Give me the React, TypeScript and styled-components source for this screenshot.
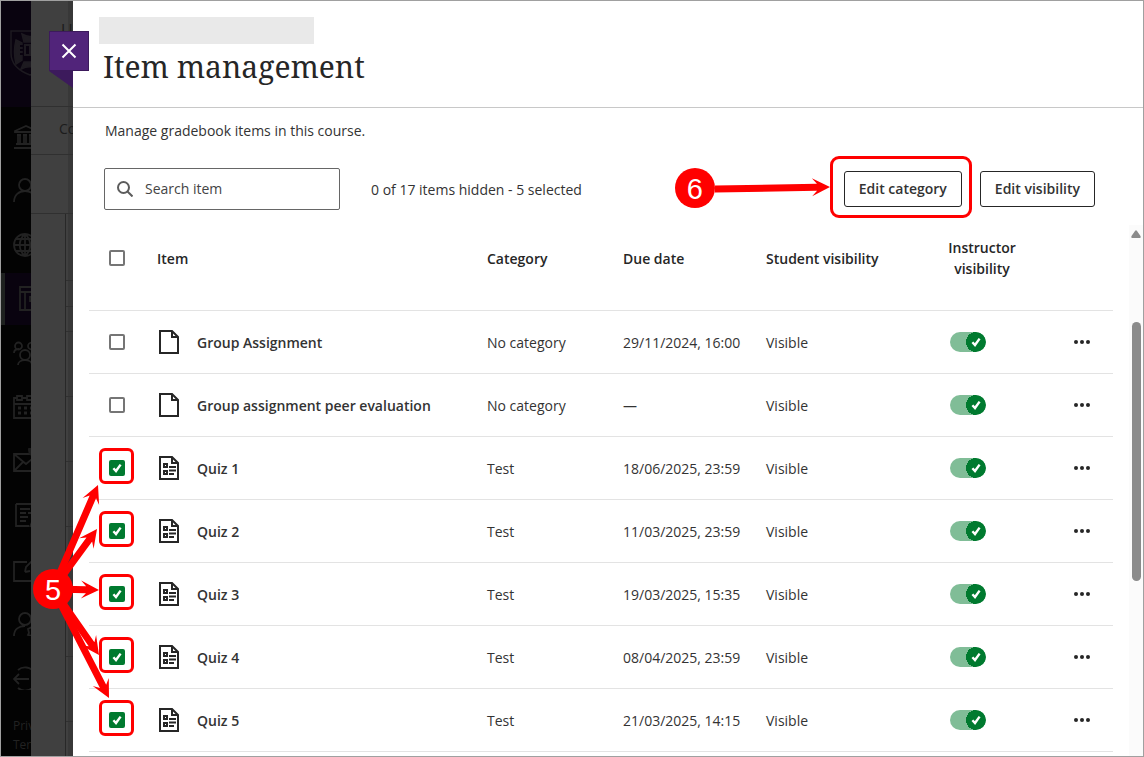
import React from "react";
import styled, { createGlobalStyle, css } from "styled-components";

const GlobalStyle = createGlobalStyle`
  *, *::before, *::after { box-sizing: border-box; }
  body {
    margin: 0;
    background: #fff;
    color: #333;
    font-family: "Open Sans", "Noto Sans", sans-serif;
    font-size: 14px;
    line-height: 20px;
  }
  button, input { font: inherit; color: inherit; }
`;

const RED = "#ff0000";
const GREEN = "#007a2f";

const Frame = styled.div`
  display: flex;
  height: 100vh;
  overflow: hidden;
  border: 1px solid #a0a0a0;
`;

const Rail = styled.nav`
  flex: none;
  display: flex;
  flex-direction: column;
  gap: 2px;
  width: 30px;
  overflow: hidden;
  background: #030303;
  color: #222;
`;

const RailBrand = styled.div`
  flex: none;
  height: 106px;
  margin-bottom: 2px;
  padding: 29px 0 0 9px;
  background: #09030f;
`;

const RailLink = styled.a<{ $active?: boolean }>`
  flex: none;
  display: flex;
  align-items: center;
  height: 52px;
  padding-left: 12px;
  color: inherit;
  ${(p) =>
    p.$active &&
    css`
      padding-left: 8px;
      border-left: 4px solid #1e211f;
      background: #09030f;
    `}
  svg { flex: none; }
`;

const RailFooter = styled.div`
  display: flex;
  flex-direction: column;
  padding: 11px 0 0 12px;
  font-size: 12px;
  line-height: 19px;
  a { color: inherit; text-decoration: none; white-space: nowrap; }
`;

const Backdrop = styled.div`
  flex: none;
  width: 42px;
  overflow: hidden;
  background: linear-gradient(to right, #404040 37px, #383838 37px);
  color: #1c1c1c;
`;

const CourseName = styled.div`
  height: 106px;
  padding: 19px 0 0 30px;
  border-bottom: 1px solid #303030;
  font-size: 16px;
  white-space: nowrap;
`;

const CourseTab = styled.div`
  height: 48px;
  padding: 12px 0 0 28px;
  border-bottom: 1px solid #303030;
  white-space: nowrap;
`;

const CourseStrip = styled.div`
  height: 59px;
  border-bottom: 1px solid #303030;
`;

const GridPeek = styled.div`
  display: flex;
  flex-direction: column;
  height: 100%;
  margin-left: 34px;
  border-left: 1px solid #282828;
`;

const PeekRow = styled.div<{ $h: number }>`
  flex: none;
  height: ${(p) => p.$h}px;
  border-bottom: 1px solid #303030;
`;

const Panel = styled.main`
  position: relative;
  flex: 1;
  min-width: 0;
  display: flex;
  flex-direction: column;
  background: #fff;
`;

const CloseButton = styled.button`
  position: absolute;
  top: 30px;
  left: -24px;
  display: grid;
  place-items: center;
  width: 40px;
  height: 40px;
  padding: 0;
  border: 1px solid #3c1a5c;
  background: #51247a;
  color: #fff;
`;

const Fold = styled.svg`
  position: absolute;
  top: 70px;
  left: -24px;
`;

const Header = styled.header`
  flex: none;
  height: 107px;
  padding: 16px 26px 0;
  border-bottom: 1px solid #c8c8c8;
`;

const Redacted = styled.div`
  width: 215px;
  height: 27px;
  background: #e9e9e9;
`;

const Title = styled.h1`
  margin: 5px 0 0 4px;
  color: #262626;
  font-family: "Noto Serif", "DejaVu Serif", serif;
  font-size: 30px;
  font-weight: 400;
  line-height: 36px;
`;

const Intro = styled.p`
  flex: none;
  margin: 13px 0 27px 32px;
`;

const Toolbar = styled.div`
  flex: none;
  display: flex;
  align-items: center;
  height: 42px;
  margin: 0 48px 15px 31px;
`;

const SearchBox = styled.label`
  display: flex;
  align-items: center;
  gap: 12px;
  width: 236px;
  height: 42px;
  padding: 0 12px;
  border: 1px solid #666;
  border-radius: 2px;
  svg { flex: none; }
`;

const SearchInput = styled.input`
  flex: 1;
  min-width: 0;
  padding: 0;
  border: 0;
  outline: 0;
  background: none;
  &::placeholder { color: #444; opacity: 1; }
`;

const Status = styled.span`
  margin-left: 31px;
  padding-top: 2px;
`;

const Actions = styled.div`
  display: flex;
  gap: 18px;
  margin-left: auto;
`;

const OutlineButton = styled.button`
  height: 36px;
  padding: 0 14px;
  border: 1px solid #262626;
  border-radius: 3px;
  background: #fff;
  font-weight: 600;
  white-space: nowrap;
`;

const Marked = styled.div`
  position: relative;
  display: flex;
`;

const Highlight = styled.span`
  position: absolute;
  inset: -15px -10px -11px -14px;
  border: 3px solid ${RED};
  border-radius: 9px;
  pointer-events: none;
`;

const StepPointer = styled.div`
  position: absolute;
  top: -3px;
  right: calc(100% + 14px);
  display: flex;
  align-items: center;
`;

const StepBadge = styled.span`
  position: relative;
  display: grid;
  place-items: center;
  width: 40px;
  height: 40px;
  padding-top: 2px;
  border-radius: 50%;
  background: ${RED};
  color: #fff;
  font: 29px/38px "Liberation Sans", Arial, sans-serif;
`;

const ScrollArea = styled.div`
  flex: 1;
  min-height: 0;
  display: flex;
`;

const TableWrap = styled.div`
  flex: 1;
  min-width: 0;
  padding: 0 16px;
  overflow: hidden;
`;

const Table = styled.table`
  width: 100%;
  table-layout: fixed;
  border-collapse: separate;
  border-spacing: 0;
`;

const Col = styled.col<{ $w?: number }>`
  width: ${(p) => (p.$w ? `${p.$w}px` : "auto")};
`;

const Th = styled.th<{ $center?: boolean; $inset?: boolean }>`
  height: 86px;
  padding: 0 0 ${(p) => (p.$center || p.$inset ? 20 : 18)}px ${(p) => (p.$inset ? 20 : 0)}px;
  border-bottom: 1px solid #e3e3e3;
  color: #262626;
  font-weight: 600;
  line-height: 21px;
  text-align: ${(p) => (p.$center ? "center" : "left")};
`;

const Td = styled.td<{ $inset?: number }>`
  height: 63px;
  padding: 0 0 0 ${(p) => p.$inset ?? 0}px;
  border-bottom: 1px solid #e3e3e3;
`;

const TextTd = styled(Td)`
  padding-top: 2px;
`;

const ItemName = styled.span`
  display: flex;
  align-items: center;
  gap: 16px;
  font-weight: 600;
  svg { flex: none; }
`;

const ItemLabel = styled.span`
  padding-top: 2px;
`;

const CheckWrap = styled.span`
  position: relative;
  display: block;
  width: 16px;
  height: 16px;
  svg { position: absolute; inset: 0; pointer-events: none; }
`;

const CheckInput = styled.input`
  display: block;
  appearance: none;
  width: 16px;
  height: 16px;
  margin: 0;
  border: 2px solid #757575;
  border-radius: 2px;
  background: #fff;
  &:checked { border-color: ${GREEN}; background: ${GREEN}; }
`;

const CheckMark = styled.span`
  position: absolute;
  top: -12px;
  left: -10px;
  width: 35px;
  height: 36px;
  border: 3px solid ${RED};
  border-radius: 6px;
  pointer-events: none;
`;

const ToggleWrap = styled.span`
  position: relative;
  display: block;
  width: 36px;
  height: 20px;
  svg { position: absolute; top: 2px; right: 2px; pointer-events: none; }
`;

const ToggleInput = styled.input`
  display: block;
  appearance: none;
  width: 36px;
  height: 20px;
  margin: 0;
  border-radius: 10px;
  background: radial-gradient(circle at 26px 10px, ${GREEN} 10px, #80bd97 10px);
`;

const MoreButton = styled.button`
  display: block;
  padding: 0;
  border: 0;
  background: none;
`;

const Scrollbar = styled.div`
  flex: none;
  display: flex;
  flex-direction: column;
  align-items: center;
  gap: 84px;
  width: 14px;
  padding: 5px 0 0;
  background: #fbfbfb;
`;

const Thumb = styled.span`
  width: 9px;
  height: 259px;
  margin-left: 1px;
  border-radius: 5px;
  background: #8b8b8b;
`;

const StepFive = styled.div`
  position: absolute;
  top: 568px;
  left: -40px;
  pointer-events: none;
`;

const ArrowFan = styled.svg`
  position: absolute;
  top: -88px;
  left: 0;
`;

const Tick = () => (
  <svg width="16" height="16" viewBox="0 0 16 16" fill="none" stroke="#fff" strokeWidth="2.4">
    <path d="M4.4 8.2 7 11 11.6 4.6" />
  </svg>
);

const PageIcon = ({ quiz }: { quiz?: boolean }) => (
  <svg width="24" height="24" viewBox="0 0 24 24" fill="none" stroke="#262626" strokeWidth="2">
    <path d="M3 1h12l6 6v16H3z" />
    <path d="M15 1v6h6" />
    {quiz && (
      <>
        <path d="M7 8h3v3H7zM7 15h3v3H7z" />
        <path d="M12 11h7M12 14.5h7M12 18h5" strokeWidth="1.8" />
      </>
    )}
  </svg>
);

const railIcons: { name: string; active?: boolean; art: React.ReactNode }[] = [
  {
    name: "Institution page",
    art: (
      <path d="M2 7 13 2l11 5v1H2zM4 11h4M10 11h4M16 11h4M5 11v8M7 11v8M11 11v8M13 11v8M17 11v8M19 11v8M3 20h22M1 24h24" />
    ),
  },
  { name: "Profile", art: <path d="M6 7a6 6 0 1 0 12 0 6 6 0 0 0-12 0M1 24c0-7 5-11 11-11s11 4 11 11" /> },
  {
    name: "Activity",
    art: <path d="M1 13a11 11 0 1 0 22 0 11 11 0 0 0-22 0M1 13h22M3 7h18M3 19h18M12 2v22M12 2c-7 6-7 16 0 22M12 2c7 6 7 16 0 22" />,
  },
  { name: "Courses", active: true, art: <path d="M7 1h18v23H7zM12 6v18M7 6h18M22 11h-5v4h5" /> },
  {
    name: "Organisations",
    art: (
      <path d="M2 6a3.5 3.5 0 1 0 7 0 3.5 3.5 0 0 0-7 0M15 6a3.5 3.5 0 1 0 7 0 3.5 3.5 0 0 0-7 0M7 15a5 5 0 1 0 10 0 5 5 0 0 0-10 0M1 13c0-3 2-4 5-4M18 9c3 0 5 1 5 4M5 25c0-3 3-5 7-5s7 2 7 5" />
    ),
  },
  {
    name: "Calendar",
    art: (
      <>
        <path d="M1 4h3M9 4h5M19 4h6M1 3v21h24V4M1 10h24" />
        <path d="M4 2h5v4H4zM14 2h5v4h-5z" />
        <path d="M5 14h18M5 19h18" strokeWidth="3" strokeDasharray="3 3" />
      </>
    ),
  },
  {
    name: "Messages",
    art: (
      <>
        <path d="M1 6h24v17H1zM1 6l12 10L25 6M1 23l9-9" />
        <circle cx="22" cy="2" r="7" fill="#1c1c1c" stroke="none" />
      </>
    ),
  },
  { name: "Grades", art: <path d="M3 2h18v14M3 2v22h13M7 7h10M7 11h6M15 11h3M7 15h8M7 19h6M17 25l2-5" /> },
  { name: "Tools", art: <path d="M14 6H1v19h20v-9M12 16l1-5 9-9M12 16l5-1" /> },
  { name: "Admin", art: <path d="M6 9a6 6 0 1 0 12 0 6 6 0 0 0-12 0M1 26c0-7 5-10 11-10M19 17l-4 2 1 4-1 2 4 1" /> },
  { name: "Sign out", art: <path d="M1 15h15M6 10l-5 5 5 5M5 6a11 11 0 0 1 16 2M5 24a11 11 0 0 0 16-2" /> },
];

type Item = { name: string; category: string; due: string; quiz?: boolean };

const items: Item[] = [
  { name: "Group Assignment", category: "No category", due: "29/11/2024, 16:00" },
  { name: "Group assignment peer evaluation", category: "No category", due: "—" },
  { name: "Quiz 1", category: "Test", due: "18/06/2025, 23:59", quiz: true },
  { name: "Quiz 2", category: "Test", due: "11/03/2025, 23:59", quiz: true },
  { name: "Quiz 3", category: "Test", due: "19/03/2025, 15:35", quiz: true },
  { name: "Quiz 4", category: "Test", due: "08/04/2025, 23:59", quiz: true },
  { name: "Quiz 5", category: "Test", due: "21/03/2025, 14:15", quiz: true },
];

// Tips of the fan's arrows, measured from the top-left corner of its drawing.
const fanTips: [number, number][] = [
  [65, 4],
  [64, 48],
  [66, 109],
  [66, 174],
  [76, 217],
];

const Arrow = ({ from, to }: { from: [number, number]; to: [number, number] }) => {
  const dx = to[0] - from[0];
  const dy = to[1] - from[1];
  const length = Math.hypot(dx, dy);
  const angle = (Math.atan2(dy, dx) * 180) / Math.PI;
  return (
    <g transform={`translate(${from[0]} ${from[1]}) rotate(${angle})`} fill={RED}>
      <path d={`M0-3.5H${length - 13}L${length - 18}-9 ${length} 0 ${length - 18} 9 ${length - 13} 3.5H0z`} />
    </g>
  );
};

const ItemRow = ({ item }: { item: Item }) => (
  <tr>
    <Td $inset={20}>
      <CheckWrap>
        <CheckInput type="checkbox" defaultChecked={item.quiz} aria-label={`Select ${item.name}`} />
        {item.quiz && <Tick />}
        {item.quiz && <CheckMark />}
      </CheckWrap>
    </Td>
    <Td>
      <ItemName>
        <PageIcon quiz={item.quiz} />
        <ItemLabel>{item.name}</ItemLabel>
      </ItemName>
    </Td>
    <TextTd>{item.category}</TextTd>
    <TextTd>{item.due}</TextTd>
    <TextTd>Visible</TextTd>
    <Td $inset={20}>
      <ToggleWrap>
        <ToggleInput type="checkbox" role="switch" defaultChecked aria-label={`Instructor visibility of ${item.name}`} />
        <Tick />
      </ToggleWrap>
    </Td>
    <Td $inset={40}>
      <MoreButton aria-label={`More options for ${item.name}`}>
        <svg width="16" height="4" viewBox="0 0 16 4" fill="#262626" display="block">
          <circle cx="2" cy="2" r="2" />
          <circle cx="8" cy="2" r="2" />
          <circle cx="14" cy="2" r="2" />
        </svg>
      </MoreButton>
    </Td>
  </tr>
);

export default function App() {
  return (
    <>
      <GlobalStyle />
      <Frame>
        <Rail>
          <RailBrand>
            <svg width="40" height="46" viewBox="0 0 40 46" fill="none" stroke="#1d1a20" strokeWidth="1.5">
              <path d="M1 1h38v22c0 11-8 18-19 22C9 41 1 34 1 23z" />
              <path
                d="M12 4c5 3 11 3 16 0l-2 8H14zM6 10l6 3v17l-6 4c-2-8-2-16 0-24zM14 32h12l3 7c-6-3-12-3-18 0z"
                fill="#1d1a20"
              />
              <path d="M10 16h3M10 20h3M10 24h3" stroke="#09030f" strokeWidth="2" />
              <path d="M15 15h5v10h-5zM20 15h5v10h-5z" strokeWidth="2" />
            </svg>
          </RailBrand>
          {railIcons.map((icon) => (
            <RailLink key={icon.name} href="#" $active={icon.active} aria-label={icon.name}>
              <svg width="26" height="26" viewBox="0 0 26 26" fill="none" stroke="currentColor" strokeWidth="1.8">
                {icon.art}
              </svg>
            </RailLink>
          ))}
          <RailFooter>
            <a href="#">Priv</a>
            <a href="#">Ter</a>
          </RailFooter>
        </Rail>
        <Backdrop>
          <CourseName>U</CourseName>
          <CourseTab>Co</CourseTab>
          <CourseStrip />
          <GridPeek>
            {[67, 26, 25, 65, 65, 65, 65, 65, 65].map((h, i) => (
              <PeekRow key={i} $h={h} />
            ))}
          </GridPeek>
        </Backdrop>
        <Panel>
          <Header>
            <Redacted />
            <Title>Item management</Title>
          </Header>
          <Intro>Manage gradebook items in this course.</Intro>
          <Toolbar>
            <SearchBox>
              <svg width="16" height="16" viewBox="0 0 16 16" fill="none" stroke="#5c5c5c" strokeWidth="2">
                <circle cx="6.5" cy="6.5" r="5.5" />
                <path d="M10.5 10.5 15.5 15.5" />
              </svg>
              <SearchInput type="text" placeholder="Search item" aria-label="Search item" />
            </SearchBox>
            <Status>0 of 17 items hidden - 5 selected</Status>
            <Actions>
              <Marked>
                <OutlineButton>Edit category</OutlineButton>
                <Highlight />
                <StepPointer>
                  <StepBadge>6</StepBadge>
                  <svg width="115" height="20" viewBox="0 0 115 20">
                    <Arrow from={[-1, 11]} to={[115, 9]} />
                  </svg>
                </StepPointer>
              </Marked>
              <OutlineButton>Edit visibility</OutlineButton>
            </Actions>
          </Toolbar>
          <ScrollArea>
            <TableWrap>
              <Table>
                <colgroup>
                  <Col $w={68} />
                  <Col />
                  <Col $w={136} />
                  <Col $w={143} />
                  <Col $w={164} />
                  <Col $w={104} />
                  <Col $w={79} />
                </colgroup>
                <thead>
                  <tr>
                    <Th $inset>
                      <CheckWrap>
                        <CheckInput type="checkbox" aria-label="Select all items" />
                      </CheckWrap>
                    </Th>
                    <Th>Item</Th>
                    <Th>Category</Th>
                    <Th>Due date</Th>
                    <Th>Student visibility</Th>
                    <Th $center>
                      Instructor
                      <br />
                      visibility
                    </Th>
                    <Th aria-label="Options" />
                  </tr>
                </thead>
                <tbody>
                  {items.map((item) => (
                    <ItemRow key={item.name} item={item} />
                  ))}
                </tbody>
              </Table>
            </TableWrap>
            <Scrollbar>
              <svg width="10" height="8" viewBox="0 0 10 8" fill="#8b8b8b">
                <path d="M4 1Q5-.5 6 1L9.5 6Q10 8 9 8H1Q0 8 .5 6z" />
              </svg>
              <Thumb />
            </Scrollbar>
          </ScrollArea>
          <Fold width="24" height="17" viewBox="0 0 24 17" fill="#3c1a5c">
            <path d="M0 0h24v17z" />
          </Fold>
          <CloseButton aria-label="Close">
            <svg width="16" height="16" viewBox="0 0 16 16" fill="none" stroke="#fff" strokeWidth="2">
              <path d="M1.5 1.5 14.5 14.5M14.5 1.5 1.5 14.5" />
            </svg>
          </CloseButton>
          <StepFive>
            <ArrowFan width="90" height="222" viewBox="0 0 90 222">
              {fanTips.map((tip) => (
                <Arrow key={tip.join()} from={[20, 108]} to={tip} />
              ))}
            </ArrowFan>
            <StepBadge>5</StepBadge>
          </StepFive>
        </Panel>
      </Frame>
    </>
  );
}
